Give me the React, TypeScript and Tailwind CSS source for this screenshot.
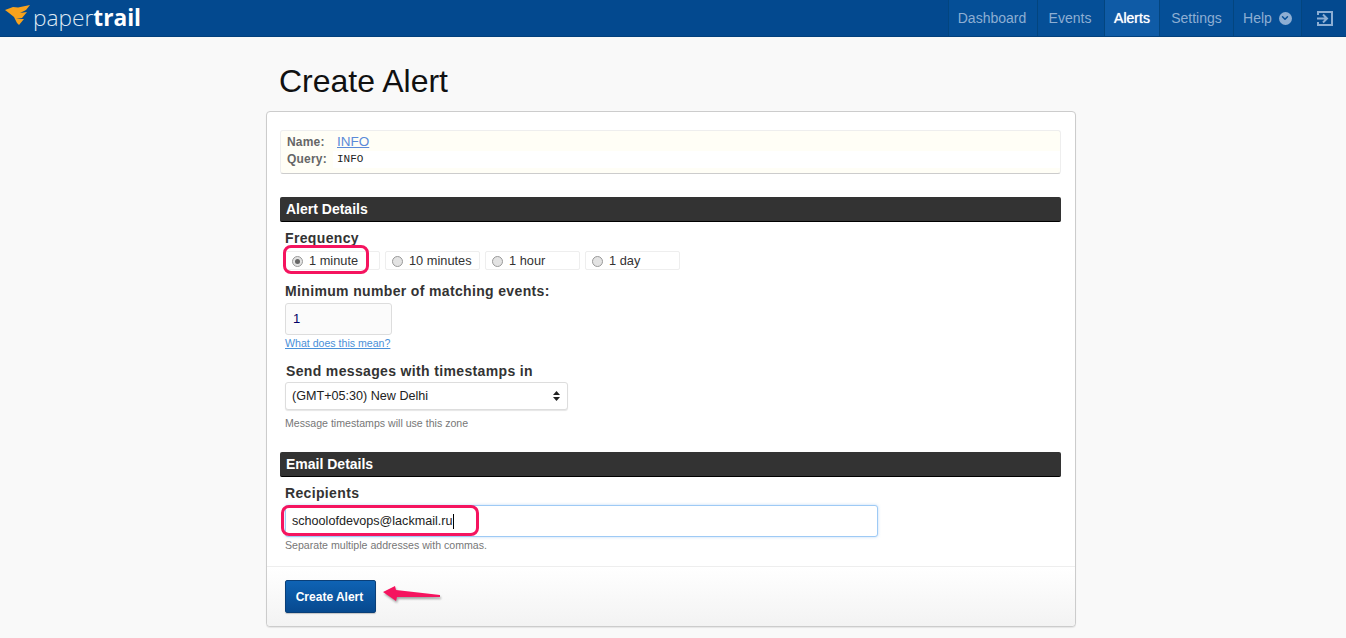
import { ChevronDown } from 'lucide-react';

const sans = 'font-["Liberation_Sans",Arial,sans-serif]';
const fieldLabel = 'text-[14px] leading-[16px] font-bold tracking-[0.35px] text-[#333]';

function NavItem({ label, width, active, extra }: { label: string; width: string; active?: boolean; extra?: React.ReactNode }) {
  return (
    <a
      className={`flex h-[36px] items-center justify-center gap-[7px] border-l border-[#03457f] text-[14px] ${width} ${
        active ? 'bg-[#0f5ba6] text-white [text-shadow:0_0_1px_#fff]' : 'bg-[#054f97] text-[#8daed3]'
      }`}
    >
      {label}
      {extra}
    </a>
  );
}

function Frequency({ label, checked }: { label: string; checked?: boolean }) {
  return (
    <label className="flex h-[19px] w-[95px] items-center rounded-[2px] border border-[#eeeeee] bg-white pt-px pl-[6px] text-[12.8px] text-[#333]">
      <span className="mr-[6px] flex h-[11px] w-[11px] items-center justify-center rounded-full border border-[#999] bg-[#e3e3e3]">
        {checked && <span className="h-[5px] w-[5px] rounded-full bg-[#666]" />}
      </span>
      {label}
    </label>
  );
}

function SectionBar({ title }: { title: string }) {
  return (
    <h3 className="flex h-[25px] items-center rounded-[2px] border-b border-b-black bg-[#333333] pl-[6px] text-[14px] font-bold text-white">
      {title}
    </h3>
  );
}

export default function App() {
  return (
    <div className={`${sans} h-[638px] w-full overflow-hidden bg-[#f9f9f9] text-[#333]`}>
      {/* top bar */}
      <header className="flex h-[37px] items-start justify-between border-b border-[#02407c] bg-[#03498f]">
        <div className="flex h-[36px] items-center pl-[5px]">
          <svg width="26" height="21" viewBox="0 0 26 21" className="mt-[-6px]">
            <path d="M0 5 L8 2 L13 2.5 L25 0 L21 5 L15 8 L22 7 L17 13 L11 14 L19 14 L14 20 L12 18 L9 12 L4 8 Z" fill="#f7a21d" />
          </svg>
          <span className="ml-[2px] text-[22.7px] leading-none text-[#dfe8f2] font-['Open_Sans',sans-serif]">
            <span className="font-light">paper</span>
            <span className="font-bold text-white">trail</span>
          </span>
        </div>
        <nav className="flex h-[36px]">
          <NavItem label="Dashboard" width="w-[89px] pr-[2px]" />
          <NavItem label="Events" width="w-[67px] pr-[2px]" />
          <NavItem label="Alerts" width="w-[55px]" active />
          <NavItem label="Settings" width="w-[74px]" />
          <NavItem
            label="Help"
            width="w-[68px]"
            extra={
              <span className="flex h-[13px] w-[13px] items-center justify-center rounded-full bg-[#8daed3]">
                <ChevronDown size={10} strokeWidth={3.5} className="text-[#054f97]" />
              </span>
            }
          />
          <a className="flex w-[45px] items-center justify-center border-l border-[#03457f] bg-[#03498f] pl-[2px]">
            <svg width="16" height="15" viewBox="0 0 16 15" fill="none" stroke="#8daed3" strokeWidth="2">
              <path d="M1 4 V1 H15 V14 H1 V11" />
              <path d="M0 7.5 H9 M6 3.5 L10 7.5 L6 11.5" />
            </svg>
          </a>
        </nav>
      </header>

      <main className="mx-auto w-[810px] -translate-x-[2px]">
        <h1 className="ml-[13px] pt-[26px] text-[32px] leading-[36px] text-[#111]">Create Alert</h1>

        <div className="relative mt-[12px] h-[516px] rounded-[4px] border border-[#cccccc] bg-white shadow-[0_1px_1px_rgba(0,0,0,0.08)]">
          <div className="pt-[18px] pr-[14px] pl-[13px]">
            {/* alert summary */}
            <div className="h-[44px] rounded-[3px] border border-[#eeeeee] border-b-[#cccccc] bg-[#fffef6] pt-[2px] pl-[6px] text-[12px] tracking-[0.2px]">
              <div className="flex h-[18px] items-center">
                <b className="w-[50px] text-[#666]">Name:</b>
                <a className="mt-px text-[13.5px] tracking-normal text-[#5b8ad8] underline">INFO</a>
              </div>
              <div className="flex h-[17px] items-center">
                <b className="mb-[2px] w-[46px] text-[#666]">Query:</b>
                <code className="flex h-[17px] flex-1 items-center bg-white pl-[4px] font-['Liberation_Mono',monospace] text-[11px] tracking-normal text-[#222]">
                  INFO
                </code>
              </div>
            </div>

            <div className="mt-[23px]">
              <SectionBar title="Alert Details" />
            </div>

            <div className="px-[5px]">
              <p className={`mt-[8px] ${fieldLabel}`}>Frequency</p>
              <div className="mt-[5px] flex gap-[5px]">
                <Frequency label="1 minute" checked />
                <Frequency label="10 minutes" />
                <Frequency label="1 hour" />
                <Frequency label="1 day" />
              </div>

              <p className={`mt-[13px] ${fieldLabel}`}>Minimum number of matching events:</p>
              <div className="mt-[4px] flex h-[32px] w-[107px] items-center rounded-[3px] border border-[#dddddd] bg-[#fbfbfb] pl-[7px] text-[13px] text-[#000066]">
                1
              </div>
              <a className="mt-[2px] block text-[10.6px] leading-[13px] text-[#4a90d9] underline">What does this mean?</a>

              <p className={`mt-[13px] ml-px ${fieldLabel}`}>Send messages with timestamps in</p>
              <div className="mt-[3px] flex h-[28px] w-[283px] items-center justify-between rounded-[3px] border border-[#dddddd] bg-white pr-[6px] pl-[6px] text-[12.6px] text-[#222] shadow-[0_1px_1px_rgba(0,0,0,0.1)]">
                (GMT+05:30) New Delhi
                <svg width="9" height="12" viewBox="0 0 9 12">
                  <path d="M4.5 1 L8 5 H1 Z M4.5 11 L1 7 H8 Z" fill="#222" />
                </svg>
              </div>
              <p className="mt-[7px] text-[10.6px] leading-[13px] text-[#777]">Message timestamps will use this zone</p>
            </div>

            <div className="mt-[22px]">
              <SectionBar title="Email Details" />
            </div>

            <div className="px-[5px]">
              <p className={`mt-[8px] ${fieldLabel}`}>Recipients</p>
              <div className="mt-[4px] flex h-[32px] w-[593px] items-center rounded-[3px] border border-[#9ecaf5] bg-white pl-[6px] text-[12.6px] text-[#222] shadow-[0_0_3px_rgba(120,180,240,0.5)]">
                schoolofdevops@lackmail.ru
                <span className="ml-px h-[15px] w-px bg-black" />
              </div>
              <p className="mt-[2px] text-[10.6px] leading-[13px] text-[#777]">Separate multiple addresses with commas.</p>
            </div>
          </div>

          {/* footer */}
          <div className="absolute right-0 bottom-0 left-0 h-[60px] rounded-b-[4px] border-t border-[#eeeeee] bg-gradient-to-b from-white to-[#f3f3f3] pt-[13px] pl-[18px]">
            <button className="h-[33px] w-[91px] rounded-[2px] border border-[#0a3f78] bg-gradient-to-b from-[#0f63b4] to-[#07498f] pr-[2px] text-[12px] font-bold text-white shadow-[0_1px_1px_rgba(0,0,0,0.2)]">
              Create Alert
            </button>
          </div>

          {/* pink annotations */}
          <div className="absolute top-[133px] left-[16px] h-[29px] w-[86px] rounded-[8px] border-[3px] border-[#f5145f]" />
          <div className="absolute top-[393px] left-[14px] h-[31px] w-[198px] rounded-[8px] border-[3px] border-[#f5145f]" />
          <svg className="absolute top-[473px] left-[116px] drop-shadow-[1px_2px_1px_rgba(0,0,0,0.35)]" width="60" height="22" viewBox="0 0 60 22">
            <path d="M0 7 L12 1 L13 5 L57 10 L57 12 L14 12 L13 16 Z" fill="#f5145f" />
          </svg>
        </div>
      </main>
    </div>
  );
}
